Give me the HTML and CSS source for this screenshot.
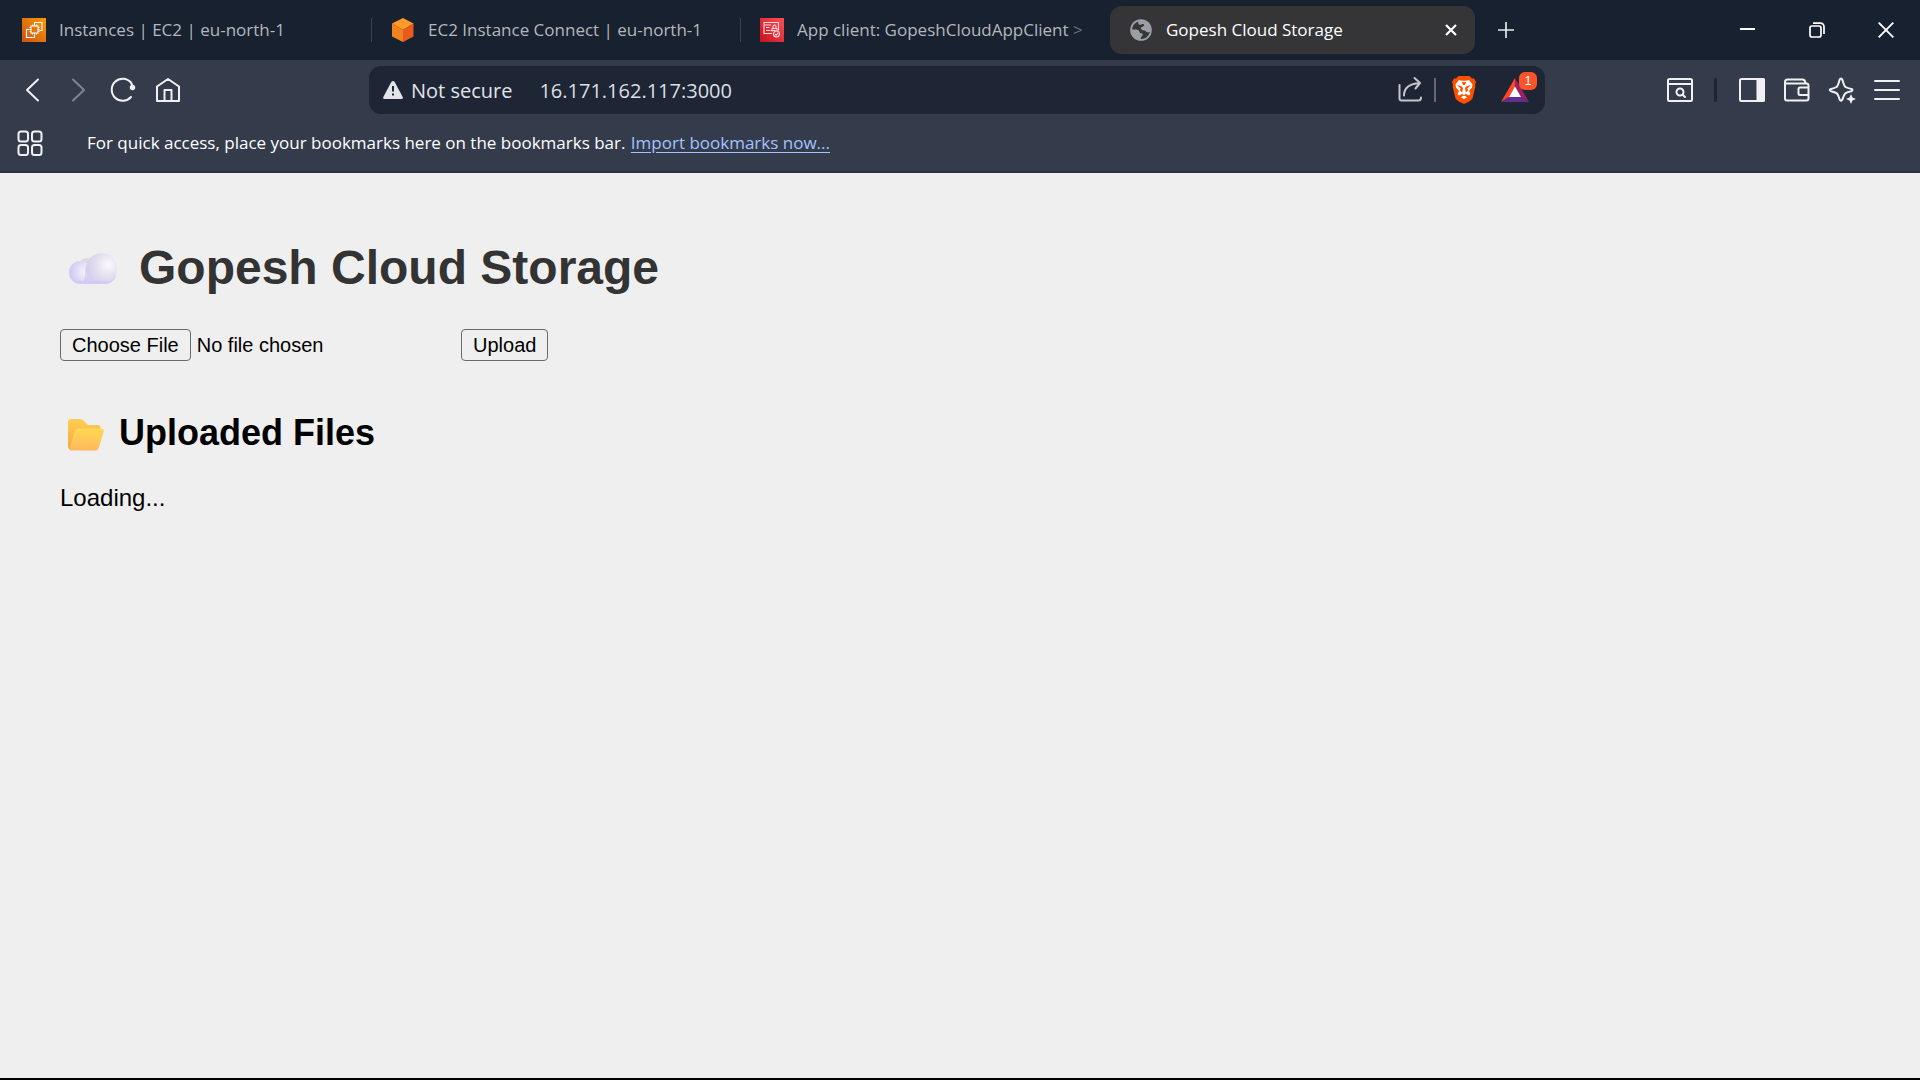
FILE: index.html
```html
<!DOCTYPE html>
<html lang="en">
<head>
<meta charset="utf-8">
<title>Gopesh Cloud Storage</title>
<link rel="stylesheet" href="styles.css">
</head>
<body>
<header class="browser">
  <div class="tab-strip">
    <nav class="tabs" aria-label="Open tabs">
      <a class="tab" href="#ec2">
        <svg class="favicon" viewBox="0 0 24 24" aria-hidden="true">
          <defs><linearGradient id="ec2g" x1="0" y1="1" x2="1" y2="0"><stop offset="0" stop-color="#c8511b"/><stop offset="1" stop-color="#f90"/></linearGradient></defs>
          <path fill="url(#ec2g)" d="M0 0h24v24H0z"/>
          <g fill="none" stroke="#fff" stroke-width="1.1"><rect x="9" y="8" width="7" height="7"/><path d="M10.500 8V6.500M12.500 8V6.500M14.500 8V6.500M10.500 16.500V15M12.500 16.500V15M14.500 16.500V15M9 9.500H7.500M9 11.500H7.500M9 13.500H7.500M17.500 9.500H16M17.500 11.500H16M17.500 13.500H16M12.500 6.500V4.500h7.500v8h-2.500M7 11.500H4.500v8h8V17"/></g>
        </svg>
        <span class="tab-title">Instances | EC2 | eu-north-1</span>
      </a>
      <a class="tab" href="#connect">
        <svg class="favicon" viewBox="0 0 24 24" aria-hidden="true">
          <path fill="#ff9a28" d="M12 0l10.500 5.500L12 12 1 5.500z"/><path fill="#f58220" d="M1 5.500L12 12v12L1 18.500z"/><path fill="#ea5b1b" d="M22.500 5.500L12 12v12l10.500-5.500z"/>
        </svg>
        <span class="tab-title">EC2 Instance Connect | eu-north-1</span>
      </a>
      <a class="tab" href="#client">
        <svg class="favicon" viewBox="0 0 24 24" aria-hidden="true">
          <defs><linearGradient id="cogg" x1="0" y1="1" x2="1" y2="0"><stop offset="0" stop-color="#c1121f"/><stop offset="1" stop-color="#ff4f55"/></linearGradient></defs>
          <path fill="url(#cogg)" d="M0 0h24v24H0z"/>
          <g fill="none" stroke="#ffd9dc" stroke-width="1.100"><path d="M12 15.500H4v-11h14.500v8M4 7h7M6 9.500h3.500M6 12.500h4M12 13.500v-3h5v2M13 10.500V8q1.500-2 3 0v2.500M10.500 12.500h5"/><circle cx="16.500" cy="16" r="3"/><path d="M15 16l1.200 1.200 2-2.400"/></g>
        </svg>
        <span class="tab-title">App client: GopeshCloudAppClient <span class="dim">&gt;</span></span>
      </a>
      <div class="tab tab-active">
        <svg class="favicon" viewBox="0 0 24 24" aria-hidden="true">
          <circle cx="12" cy="12" r="10.800" fill="#9aa0a6"/>
          <path fill="#353538" d="M9.500 3.500C5.500 4.800 3.200 8 3.200 11.500c2 0 3.800 0 5.300.3 1.500.5 1.800 1.500 2.200 2.700.5.800 1.800.6 2.700 1.200.8.800.3 1.900-.6 2.500-1 .6-1 1.500-1 2.700 4.500.2 8.300-3 9-7.200-1.300 1-3 .8-3.700-.3-.8-1.500-2.700-1-4-1.500-1.200-.6-1.500-2-.6-2.800.8-.7 2.200-.4 2.600-1.400.3-1-.5-1.700-1.600-1.600-1.200 0-2 1.200-3 .7-1.200-.6-1.600-1.700-1-3.300z"/>
        </svg>
        <span class="tab-title">Gopesh Cloud Storage</span>
        <button class="icon-button tab-close" type="button" aria-label="Close tab"><svg width="16" height="16" viewBox="0 0 16 16"><path d="M3 3l10 10M13 3L3 13" stroke="#fff" stroke-width="2.200"/></svg></button>
      </div>
    </nav>
    <button class="icon-button new-tab" type="button" aria-label="New tab"><svg width="16" height="16" viewBox="0 0 16 16"><path d="M8 0v16M0 8h16" stroke="#e6e8ec" stroke-width="1.700"/></svg></button>
    <div class="window-controls">
      <button class="icon-button" type="button" aria-label="Minimize"><svg width="16" height="16" viewBox="0 0 16 16"><path d="M0 7h15" stroke="#fff" stroke-width="2"/></svg></button>
      <button class="icon-button" type="button" aria-label="Restore"><svg width="16" height="16" viewBox="0 0 16 16" fill="none" stroke="#fff" stroke-width="1.700"><rect x="1" y="4" width="11" height="11" rx="2"/><path d="M4 1.200h7.500a3.500 3.500 0 0 1 3.500 3.500V12"/></svg></button>
      <button class="icon-button" type="button" aria-label="Close"><svg width="16" height="16" viewBox="0 0 16 16"><path d="M.7.700l14.600 14.600M15.300.700L.7 15.300" stroke="#fff" stroke-width="1.900"/></svg></button>
    </div>
  </div>

  <div class="toolbar">
    <div class="tools">
      <button class="icon-button" type="button" aria-label="Back"><svg class="icon" viewBox="0 0 26 26"><path d="M18 2.500L7 13l11 10.500"/></svg></button>
      <button class="icon-button" type="button" aria-label="Forward" disabled><svg class="icon faded" viewBox="0 0 26 26"><path d="M8 2.500L19 13 8 23.500"/></svg></button>
      <button class="icon-button" type="button" aria-label="Reload"><svg class="icon" viewBox="0 0 26 26"><path d="M21 20a11 11 0 1 1 0-14.500L22.500 9"/><circle cx="22.500" cy="10.500" r="2.700" fill="#f0f1f3" stroke="none"/></svg></button>
      <button class="icon-button" type="button" aria-label="Home"><svg class="icon" viewBox="0 0 26 26"><path d="M2 9.500L13 2l11 7.500V24H2zM9.500 24V13h7v11"/></svg></button>
    </div>
    <div class="address">
      <svg class="warning" width="20" height="20" viewBox="0 0 20 20" aria-hidden="true"><path fill="#e3e4e8" d="M8.300 2Q10 0 11.700 2L19.700 17q.7 2-1.200 2h-17Q-.4 19 .3 17z"/><path stroke="#1e2636" stroke-width="2" d="M10 6v5.500M10 13.500v2"/></svg>
      <span class="security">Not secure</span>
      <input class="url" type="text" aria-label="Address" value="16.171.162.117:3000">
      <button class="icon-button share" type="button" aria-label="Share"><svg class="icon" viewBox="0 0 26 26"><path stroke="#c3c6cc" d="M2.500 8v13.500q0 2 2 2h17q2.500 0 2.500-3M7 18.500q0-11.500 16-12.500M17.500 1L23 6l-4.500 5.500"/></svg></button>
      <span class="divider"></span>
      <button class="icon-button shield" type="button" aria-label="Brave Shields"><svg width="24" height="28" viewBox="0 0 24 28"><path fill="#ff5000" d="M6.500 0h11l2.500 2.500h2L24 6l-1 3 .5 1-3 12.500Q18 25.500 12 28 6 25.500 3.500 22.500L.5 10 1 9 0 6l2-3.500h2z"/><path fill="#fff" d="M7 4l3 .8h4L17 4l3.500 4.500-.5 3-3 3.500 1.500 3-1.500 1.500-3-1.500-2 1-2-1L7 19.500 5.500 18 7 15l-3-3.500-.5-3zM12 19.500l3.200 1.700L12 23l-3.200-1.800z"/><path fill="#ff5000" d="M5 9l4.500 1.200L11 12l-.8 4.500L7.700 14l1-1.500zM19 9l-4.500 1.200L13 12l.8 4.500 2.500-2.500-1-1.500zM10 6h4l-1 3h-2z"/></svg></button>
      <button class="icon-button rewards" type="button" aria-label="Brave Rewards"><svg width="28" height="24" viewBox="0 0 28 24"><path fill="#ff4724" d="M14 0L0 24l8.500-5.500L14 9z"/><path fill="#9e1f63" d="M14 0l14 24-8.500-5.500L14 9z"/><path fill="#662d91" d="M0 24h28l-8.500-5.500h-11z"/><path fill="#fff" d="M14 8.500l6 10.500H8z"/></svg><span class="badge">1</span></button>
    </div>
    <div class="tools">
      <button class="icon-button" type="button" aria-label="Find on page"><svg class="icon" viewBox="0 0 26 26"><rect x="1" y="2" width="24" height="22" rx="1.500"/><path d="M1 7h24M15.500 17.500L18 20"/><circle cx="13" cy="15" r="3.500"/></svg></button>
      <span class="tool-divider"></span>
      <button class="icon-button" type="button" aria-label="Sidebar"><svg class="icon" viewBox="0 0 26 26"><rect x="1" y="2" width="24" height="22" rx="1.500"/><path fill="#f0f1f3" d="M18.500 2H24q1 0 1 1v20q0 1-1 1h-5.500z"/></svg></button>
      <button class="icon-button" type="button" aria-label="Wallet"><svg class="icon" viewBox="0 0 26 26"><path d="M1 6.500h21.500q2 0 2 2v13q0 2-2 2H3q-2 0-2-2V5q0-2.500 2.500-2.500h15Q21 2.500 21.500 6M24.500 10.500H16q-1.500 0-1.500 1.500v4.500q0 1.500 1.500 1.500h8.500"/></svg></button>
      <button class="icon-button" type="button" aria-label="Leo AI"><svg class="icon" viewBox="0 0 26 26"><path d="M10.500 3Q12 0 13.500 3q1.500 6 3 7t6 2q2 1 0 2.200-4.500.8-6 2t-3 6q-1.500 3-3 0-1.500-5-3-6t-5.500-2q-2.500-1.200 0-2.200 4-1 5.500-2t3-7z"/><path fill="#f0f1f3" stroke="none" d="M22 17l1.500 3.500L27 22l-3.500 1.500L22 27l-1.500-3.500L17 22l3.500-1.500z"/></svg></button>
      <button class="icon-button" type="button" aria-label="Menu"><svg class="icon" viewBox="0 0 26 26"><path d="M1 4h24M1 13h24M1 22h24"/></svg></button>
    </div>
  </div>

  <div class="bookmarks">
    <button class="icon-button" type="button" aria-label="All bookmarks"><svg class="icon" viewBox="0 0 26 26"><rect x="1.500" y="1.500" width="9.500" height="10" rx="2.500"/><rect x="15" y="1.500" width="9.500" height="10" rx="2.500"/><rect x="1.500" y="15" width="9.500" height="10" rx="2.500"/><rect x="15" y="15" width="9.500" height="10" rx="2.500"/></svg></button>
    <p class="bookmark-note">For quick access, place your bookmarks here on the bookmarks bar. <a class="import-link" href="#import">Import bookmarks now...</a></p>
  </div>
</header>

<main class="page">
  <h1 class="page-title">
    <svg class="cloud" width="48" height="32" viewBox="0 0 48 32" aria-hidden="true">
      <defs>
        <linearGradient id="cb" x1="0" y1="0" x2="0" y2="1"><stop offset="0" stop-color="#e6e4ee"/><stop offset="1" stop-color="#d1c8f5"/></linearGradient>
        <radialGradient id="cr" cx=".72" cy=".38" r=".75"><stop offset="0" stop-color="#fbfaff"/><stop offset=".5" stop-color="#e4e0ef"/><stop offset="1" stop-color="#d3ccee"/></radialGradient>
        <radialGradient id="cl" cx=".75" cy=".45" r=".8"><stop offset="0" stop-color="#f8f7fc"/><stop offset="1" stop-color="#cdc3f0"/></radialGradient>
      </defs>
      <circle cx="18" cy="13" r="8" fill="#dcdcdc"/><rect x="2" y="10" width="45" height="21" rx="10" fill="url(#cb)"/><circle cx="11.500" cy="19.500" r="11.500" fill="url(#cl)"/><path fill="url(#cb)" d="M15 12h14v19H13q5-8 2-19z"/><circle cx="32.500" cy="15.500" r="15.500" fill="url(#cr)"/><path fill="#d1c8f5" opacity=".7" d="M5 28h36l-5 3H11z"/>
    </svg>
    <span>Gopesh Cloud Storage</span>
  </h1>
  <form class="upload">
    <input class="file" type="file" aria-label="File to upload">
    <button class="submit" type="button">Upload</button>
  </form>
  <h2 class="section-title">
    <svg class="folder" width="36" height="32" viewBox="0 0 36 32" aria-hidden="true">
      <defs>
        <linearGradient id="fb" x1="0" y1="0" x2="0" y2="1"><stop offset="0" stop-color="#ffcf52"/><stop offset="1" stop-color="#f5a63c"/></linearGradient>
        <linearGradient id="ff" x1="0" y1="0" x2="0" y2="1"><stop offset="0" stop-color="#ffd955"/><stop offset="1" stop-color="#ffb85c"/></linearGradient>
      </defs>
      <path fill="url(#fb)" d="M0 3q0-3 3-3h9q2 0 3.500 1.500l3 3Q19.500 6 21 6h9q2.500 0 2.500 3v5L28 31H4q-4 0-4-4z"/><path fill="url(#ff)" d="M10 9.500h23.500q3 0 2.200 3L31 28q-1 3.500-4 3.500H4Q.8 31.500 2 28l5-16q.8-2.500 3-2.500z"/>
    </svg>
    <span>Uploaded Files</span>
  </h2>
  <p class="status">Loading...</p>
</main>
</body>
</html>
```
FILE: styles.css
```css
* {
  box-sizing: border-box;
}

body {
  margin: 0;
  min-height: 100vh;
  display: flex;
  flex-direction: column;
  background: #efefef;
  border-bottom: 2px solid #000;
  font-family: "Liberation Sans", Arial, sans-serif;
}

.browser {
  background: #343c4c;
  border-bottom: 2px solid #2b3241;
  color: #fff;
  font-family: "Open Sans", "Noto Sans", sans-serif;
  font-size: 17px;
}

.icon-button {
  display: flex;
  align-items: center;
  justify-content: center;
  flex: none;
  padding: 0;
  border: 0;
  background: none;
}

.icon {
  width: 26px;
  height: 26px;
  overflow: visible;
  fill: none;
  stroke: #f0f1f3;
  stroke-width: 2;
  stroke-linecap: round;
  stroke-linejoin: round;
}

.faded {
  opacity: 0.4;
}

/* Tab strip */
.tab-strip {
  display: flex;
  align-items: center;
  height: 60px;
  padding-left: 3px;
  background: #182130;
}

.tabs {
  display: flex;
  flex: 0 1 1472px;
  min-width: 0;
}

.tab {
  display: flex;
  align-items: center;
  flex: 0 1 369px;
  min-width: 0;
  gap: 13px;
  height: 48px;
  padding: 0 16px 0 19px;
  color: #b4b7bc;
  text-decoration: none;
  background: linear-gradient(#3b424e, #3b424e) right center / 1px 24px no-repeat;
}

.tab:nth-child(3) {
  background: none;
}

.tab-active {
  flex-basis: 365px;
  border-radius: 12px;
  background: #353538;
  color: #fff;
}

.favicon {
  flex: none;
  width: 24px;
  height: 24px;
}

.tab-title {
  flex: 1;
  overflow: hidden;
  padding-bottom: 2px;
  white-space: nowrap;
}

.dim {
  color: #6c727c;
}

.new-tab {
  width: 62px;
  height: 48px;
}

.window-controls {
  display: flex;
  margin-left: auto;
}

.window-controls .icon-button {
  width: 69px;
  height: 60px;
}

/* Toolbar */
.toolbar {
  display: flex;
  align-items: center;
  justify-content: space-between;
  height: 60px;
  padding: 0 11px 0 10px;
}

.tools {
  display: flex;
  align-items: center;
}

.tools .icon-button {
  width: 45px;
  height: 48px;
}

.tool-divider {
  width: 3px;
  height: 24px;
  margin: 0 12px;
  border-radius: 2px;
  background: #1e2636;
}

.address {
  display: flex;
  align-items: center;
  flex: 1;
  min-width: 0;
  height: 48px;
  margin: 0 112px 0 179px;
  padding: 0 16px 0 14px;
  border-radius: 12px;
  background: #1e2636;
  color: #e3e4e8;
  font-size: 20px;
}

.warning {
  flex: none;
}

.security {
  margin: 0 27px 0 8px;
  white-space: nowrap;
}

.url {
  flex: 1;
  min-width: 0;
  padding: 0;
  border: 0;
  background: none;
  color: #dddfe3;
  font: inherit;
}

.divider {
  width: 2px;
  height: 24px;
  margin: 0 16px 0 11px;
  background: #626874;
}

.rewards {
  position: relative;
  margin-left: 25px;
}

.badge {
  position: absolute;
  top: -6px;
  right: -8px;
  width: 18px;
  height: 18px;
  border-radius: 6px;
  background: #fb542b;
  color: #fff;
  font-size: 12px;
  line-height: 18px;
  text-align: center;
}

/* Bookmarks bar */
.bookmarks {
  display: flex;
  align-items: center;
  gap: 44px;
  height: 51px;
  padding: 0 17px 6px;
}

.bookmark-note {
  margin: 0;
  white-space: nowrap;
}

.import-link {
  margin-left: 1px;
  color: #a3c2ff;
  text-underline-offset: 3px;
}

/* Page content */
.page {
  flex: 1;
  padding: 65px 60px;
}

.page-title,
.section-title {
  display: flex;
  align-items: center;
  margin: 0;
}

.page-title {
  color: #333;
  font-size: 48px;
  line-height: 60px;
}

.cloud {
  margin: 2px 22px 0 9px;
}

.upload {
  display: flex;
  gap: 7px;
  margin: 31px 0 50px;
}

.file {
  width: 394px;
  font-family: inherit;
  font-size: 20px;
}

.file::file-selector-button,
.submit {
  height: 32px;
  padding: 0 11px;
  border: 1px solid #6b6b6b;
  border-radius: 4px;
  background: #efefef;
  color: #000;
  font-family: inherit;
  font-size: 20px;
}

.file::file-selector-button {
  margin-right: 6px;
}

.section-title {
  font-size: 36px;
  line-height: 44px;
}

.folder {
  margin: 4px 15px 0 8px;
}

.status {
  margin: 29px 0 0;
  font-size: 24px;
  line-height: 28px;
}
```
